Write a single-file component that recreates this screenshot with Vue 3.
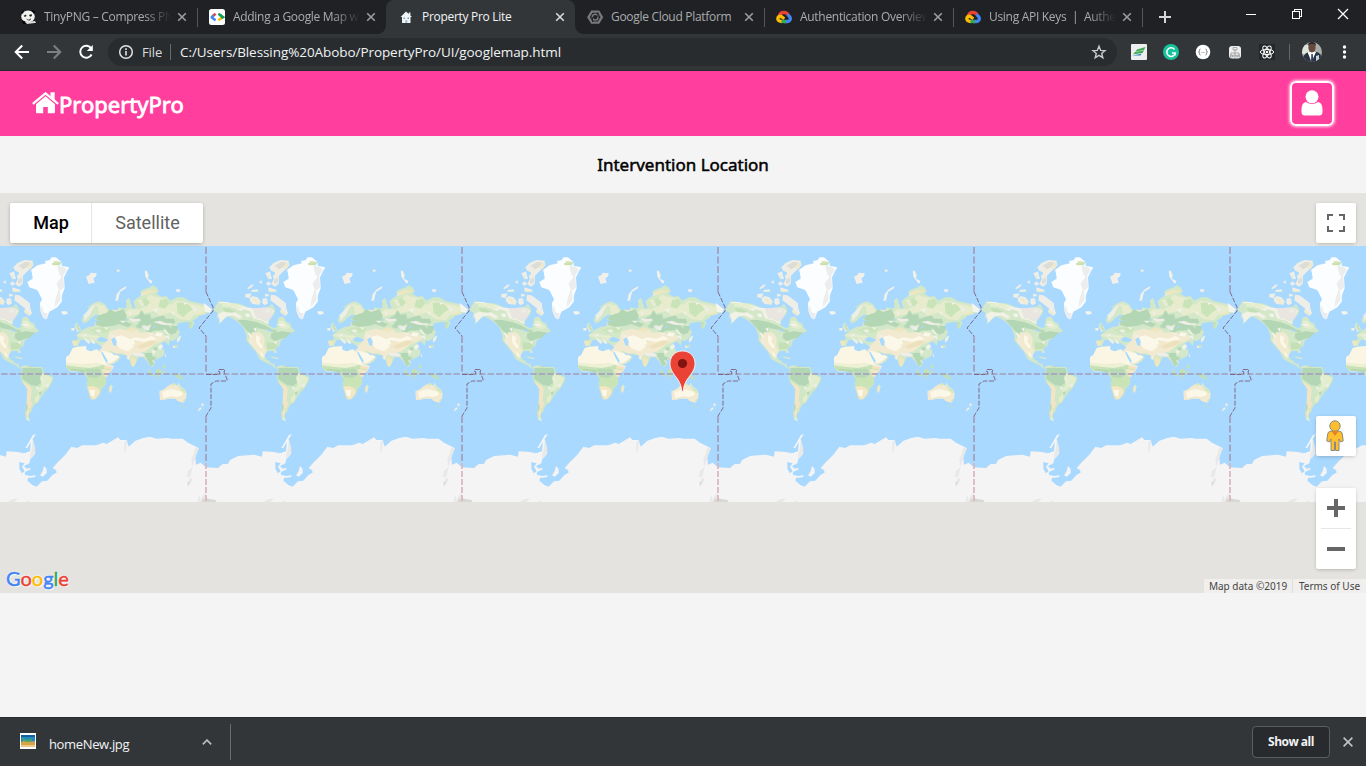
<script setup>
const tabs = [
  { title: 'TinyPNG – Compress PN', icon: 'panda', fade: true },
  { title: 'Adding a Google Map w', icon: 'code', fade: true },
  { title: 'Property Pro Lite', icon: 'home', active: true },
  { title: 'Google Cloud Platform', icon: 'hex' },
  { title: 'Authentication Overview', icon: 'cloud', fade: true },
  { title: 'Using API Keys  |  Authe', icon: 'cloud', fade: true },
]
const tiles = [-50, 206, 462, 718, 974, 1230]
const logo = [
  ['G', 'b'], ['o', 'r'], ['o', 'y'], ['g', 'b'], ['l', 'g'], ['e', 'r'],
]
</script>

<template>
  <div class="window">
    <div class="tabstrip">
      <div v-for="(t, i) in tabs" :key="i" class="tab" :class="{ active: t.active, sep: i !== 1 && i !== 2 }">
        <svg class="favicon" viewBox="0 0 16 16">
          <g v-if="t.icon === 'panda'">
            <ellipse cx="7" cy="7.5" rx="6.8" ry="6" fill="#f1f1ee" />
            <path d="M0 3L3 1L2 5ZM10 1L14 2L13 5ZM1 11Q7 15 13 12L15 15H2Z" fill="#050505" />
            <path d="M2.7 6.8L5 5.5L5.5 7L3.8 8ZM8 6L10.5 5L11 7L9 7.7ZM5 9.5Q8 12 10 9L9.5 11Q7 12.5 5 9.5Z" fill="#222" />
            <path d="M4 13L14 12L15 14L6 15Z" fill="#ddd" />
          </g>
          <g v-else-if="t.icon === 'code'" transform="translate(-1 0)">
            <rect width="16" height="16" rx="2.5" fill="#fff" />
            <g fill="none" stroke-width="2.6">
              <path d="M6.6 4.8L4.1 6.8" stroke="#ea4335" /><path d="M2 8L6.6 11.2" stroke="#4285f4" /><path d="M4.5 6.5L2.3 8.4" stroke="#4285f4" />
              <path d="M9.4 4.8L12 6.8" stroke="#0f9d58" /><path d="M11.5 6.4L14 8.2L12 9.5" stroke="#0f9d58" /><path d="M12.3 9L9.4 11.2" stroke="#fbbc05" />
            </g>
          </g>
          <g v-else-if="t.icon === 'home'" transform="translate(-1 .5)">
            <path d="M8 2L2.6 7.5H4V13.5H12.500V7.500H14L12.400 6V3H10.800V4.500Z" fill="#eef4f7" />
            <path d="M5.5 8H7V9.5H5.5ZM9.5 8H11V9.5H9.5Z" fill="#7e9ba9" /><path d="M7.300 10.500H9.300V13.500H7.300Z" fill="#a9bec8" />
          </g>
          <g v-else-if="t.icon === 'hex'" transform="translate(-.5 .5) scale(.96)">
            <path d="M4.5 2.3H11.5L15 8L11.5 13.7H4.5L1 8Z" fill="none" stroke="#77797b" stroke-width="2.4" />
            <circle cx="8" cy="8" r="3" fill="none" stroke="#77797b" stroke-width="1.5" />
            <path d="M10.800 3V8M5.200 8V13" stroke="#202124" />
          </g>
          <g v-else fill="none" stroke-width="3.300" transform="translate(-1 0)">
            <path d="M3.5 7Q4 3.5 8 3.4Q11 3.4 12 6" stroke="#ea4335" />
            <path d="M11.5 5.5Q15 8 14.2 10.5Q13.5 12.5 11 12.5H8" stroke="#4285f4" />
            <path d="M10 12.5H5" stroke="#34a853" />
            <path d="M5.500 12.5Q1.6 12 1.8 9.5Q2.3 7 5 7.3L8.300 9.8" stroke="#fbbc05" />
          </g>
        </svg>
        <span class="title" :class="{ fade: t.fade }">{{ t.title }}</span>
        <svg class="close" viewBox="0 0 10 10"><path d="M1.2 1.2L8.8 8.8M8.8 1.2L1.2 8.8" /></svg>
      </div>
      <svg class="plus" viewBox="0 0 12 12"><path d="M6 0V12M0 6H12" /></svg>
      <svg class="winbtns" viewBox="0 0 110 20" shape-rendering="crispEdges">
        <path d="M0 10.5H10M48.5 7.5H53.5V14.5H46.5V7.5H48.5M48.5 7V5.5H55.5V12.5H54" fill="none" stroke="#fff" />
        <path d="M92 5L102 15M102 5L92 15" stroke="#fff" stroke-width="1.3" shape-rendering="auto" />
      </svg>
    </div>

    <div class="toolbar">
      <svg class="nav" viewBox="0 0 108 36" fill="none" stroke-width="2">
        <path d="M29 18H16M22.2 11.5L15.7 18L22.2 24.5" stroke="#fff" />
        <path d="M47 18H60M53.8 11.5L60.3 18L53.8 24.5" stroke="#7d8082" />
        <path d="M91.3 14.5A6 6 0 1 0 91.6 20.5" stroke="#fff" />
        <path d="M92.8 11V17H86.8Z" fill="#fff" />
      </svg>
      <div class="omnibox">
        <svg class="info" viewBox="0 0 16 16"><circle cx="8" cy="8" r="6.3" fill="none" stroke="#e3e4e5" stroke-width="1.5" /><path d="M8 7V11.5M8 4.3V5.9" stroke="#e3e4e5" stroke-width="1.6" /></svg>
        <span class="file">File</span><i class="bar"></i>
        <span class="url">C:/Users/Blessing%20Abobo/PropertyPro/UI/googlemap.html</span>
        <svg class="star" viewBox="0 0 16 16"><path d="M8 2.2L9.7 6.4L14 6.700L10.7 9.5L11.800 13.700L8 11.4L4.200 13.700L5.3 9.5L2 6.700L6.3 6.4Z" fill="none" stroke="#c8cacc" stroke-width="1.4" /></svg>
      </div>
      <svg class="exts" viewBox="0 0 249 36">
        <rect x="14" y="10" width="16" height="16" rx="1" fill="#eeeeef" />
        <path d="M20 15.500L28.500 13L27 16L18.500 17.500ZM18 18L27 16.5L25.5 19L16 20.3Z" fill="#3eaa55" /><path d="M15 21.500L24.500 19.8L23.500 21.500Z" fill="#2786b5" />
        <circle cx="54" cy="18" r="8" fill="#15c39a" />
        <path d="M57.5 15.5A4.3 4.3 0 1 0 58.3 19H55M58 18.5V21.5" fill="none" stroke="#fff" stroke-width="1.6" />
        <circle cx="86" cy="18" r="7.3" fill="#fff" />
        <path d="M83.5 15Q82.3 15 82.5 16.500Q82.5 18 81.500 18Q82.5 18 82.5 19.500Q82.3 21 83.5 21M88.5 15Q89.7 15 89.5 16.500Q89.5 18 90.500 18Q89.5 18 89.5 19.500Q89.7 21 88.5 21M84.500 18.5H85.4M86.6 18.5H87.5" fill="none" stroke="#777" stroke-width=".9" />
        <rect x="112" y="12" width="12" height="12.5" rx="3" fill="#eee" />
        <path d="M118 15V22M114 22V19H122V22M116 13.5H120V16H116ZM113.500 21H115.5V23H113.500ZM116.8 21H119.2V23H116.8ZM120.5 21H122.500V23H120.5Z" fill="none" stroke="#9a9a9a" stroke-width=".8" />
        <rect x="142" y="10" width="16" height="16" fill="#25282b" />
        <g fill="none" stroke="#fff" stroke-width="1"><ellipse cx="150" cy="18" rx="6.700" ry="2.6" /><ellipse cx="150" cy="18" rx="6.700" ry="2.6" transform="rotate(60 150 18)" /><ellipse cx="150" cy="18" rx="6.700" ry="2.6" transform="rotate(120 150 18)" /></g><circle cx="150" cy="18" r="1.2" fill="#fff" />
        <path d="M172.5 10V26" stroke="#65686b" />
        <clipPath id="av"><circle cx="195" cy="18" r="10" /></clipPath>
        <g clip-path="url(#av)"><rect x="185" y="8" width="20" height="20" fill="#aaada9" /><path d="M185 11H192V20H185Z" fill="#dfe3de" /><path d="M185 28Q186 20 191 18H200Q205 20 206 28Z" fill="#293344" /><path d="M190.500 18L194.500 28L199 18Z" fill="#fff" /><path d="M194.3 20H195.8L196.3 28H194Z" fill="#34415f" /><path d="M199 22L202 21V28H199Z" fill="#ccd3dc" /><ellipse cx="195" cy="13.5" rx="3.6" ry="5" fill="#68483e" /><path d="M191 12Q191 7.5 195 7.7Q199 7.5 199 12L197 10H193Z" fill="#262322" /></g>
        <g fill="#fff"><circle cx="224.500" cy="13" r="1.7" /><circle cx="224.500" cy="18" r="1.7" /><circle cx="224.500" cy="23" r="1.7" /></g>
      </svg>
    </div>

    <header class="site">
      <div class="brand">
        <svg viewBox="0 0 27 22"><path d="M13.5 4.3L4 12.3V20.2Q4 21.2 5 21.2H11.2V15H15.8V21.2H22Q23 21.2 23 20.2V12.3Z" fill="#fff" /><path d="M.8 11.8L13.5 1.4L26.2 11.8" fill="none" stroke="#fff" stroke-width="2.3" /><path d="M18.5 .3H22.7V8.5L18.5 5Z" fill="#fff" /></svg>
        <span>PropertyPro</span>
      </div>
      <div class="userbtn"><svg viewBox="0 0 22 26"><path d="M5 12Q.5 12.5 .5 20V22Q.5 25.5 4 25.5H18Q21.5 25.5 21.5 22V20Q21.5 12.5 17 12Q14.5 14 11 14Q7.500 14 5 12Z" /><circle cx="11" cy="6.800" r="6.500" /></svg></div>
    </header>

    <h1 class="heading"><span>Intervention Location</span></h1>

    <div class="map">
      <svg class="world" viewBox="0 0 1366 256">
        <defs>
          <g id="world-tile">
            <g transform="translate(0 -6) scale(.33333)">
              <!-- North America -->
              <path fill="#d3e8c8" d="M22 210L38 184L50 184L72 190L95 190L118 198L130 208L148 204L170 208L190 200L198 192L208 210L205 222L190 240L188 256L206 266L212 262L217 232L232 230L240 245L252 250L256 262L268 274L250 280L238 294L225 300L220 318L208 326L213 338L208 340L200 332L184 334L176 345L180 358L190 362L194 370L206 372L206 380L216 384L210 386L195 375L175 366L160 356L150 335L135 318L122 302L120 280L112 262L98 248L82 236L65 228L52 240L34 254L46 236L32 232L36 220Z" />
              <path fill="#f2f1e6" d="M34 186L62 186L95 194L122 202L148 206L170 208L185 202L204 212L190 238L184 252L168 242L142 236L132 214L114 208L105 214L86 204L62 198ZM36 222L55 214L72 210L92 220L110 230L100 236L78 226L60 230L42 250Z" />
              <path fill="#e5edcf" d="M45 188L88 192L108 202L98 207L78 200L50 200ZM217 242L232 242L252 262L240 268L222 262Z" />
              <path fill="#b3d6b4" d="M94 240L120 240L150 246L176 256L198 268L214 272L208 278L184 270L155 264L148 280L144 286L126 276L114 262ZM196 280L228 274L256 278L238 294L220 298L208 304L194 294Z" />
              <path fill="#e9e6e1" d="M140 206L180 202L200 212L196 232L184 246L164 238L150 234Z" />
              <path fill="#f2ead0" d="M140 276L164 278L176 292L174 316L182 334L176 345L174 358L155 338L142 322L126 300Z" />
              <path fill="#fbf7e9" d="M150 284L163 292L160 306L170 318L165 326L150 306ZM160 332L174 346L168 352Z" />
              <path fill="#c3dfb6" d="M182 306L202 310L218 306L214 320L206 326L184 328ZM50 205L72 206L90 215L78 218L57 216Z" />
              <path fill="#f3f3ec" d="M124 276L132 280L140 296L134 294ZM142 266L152 262L150 276ZM116 222L128 220L134 230L122 232ZM212 254L228 250L240 258L226 258ZM204 306L212 302L212 316ZM62 222L70 220L76 228ZM128 300L134 302L140 316Z" />
              <path fill="#a9d9ff" d="M178 264L194 269L198 276L188 274Z" />
              <!-- Arctic archipelago -->
              <path fill="#eeeee7" d="M190 82L204 68L224 60L248 62L250 76L240 88L230 96L219 108L218 132L206 140L196 132L204 116L200 110L208 98L196 92ZM178 100L192 94L198 116L188 118ZM130 176L140 168L154 172L164 184L160 194L140 192L134 186ZM118 162L136 160L132 174L118 172ZM194 164L208 166L228 180L240 190L240 202L246 220L238 228L222 216L226 206L206 190L194 182ZM170 176L182 174L186 190L176 196L168 188ZM124 144L136 134L144 132L138 142L126 148ZM188 142L212 150L210 156L186 152ZM136 150L156 148L156 155L138 156ZM180 130L188 124L196 132L186 138ZM158 128L168 120L168 130ZM176 162L188 162L188 168L178 170ZM176 212L188 210L192 216L178 218Z" />
              <path fill="#dcdcd8" d="M206 78L224 66L242 68L232 80L219 88ZM204 120L216 112L214 130L204 130Z" />
              <path fill="#f0eac6" d="M228 82L248 66L250 74L236 88ZM138 174L152 178L160 192L150 190ZM188 152L210 152L210 156L190 156ZM224 208L240 220L238 226L226 218Z" />
              <!-- Greenland and Iceland -->
              <path fill="#fcfdff" d="M243 90L262 76L288 70L284 64L300 60L304 52L318 52L334 66L336 78L358 82L348 100L342 112L344 145L335 168L336 184L322 202L298 215L290 238L280 234L272 215L270 190L276 178L262 150L238 142L232 126L248 116L246 100Z" />
              <path fill="#ebedee" d="M322 76L338 80L352 88L340 106L342 142L330 152L332 180L314 202L316 178L326 148L320 130L334 112L326 98ZM270 204L278 200L280 216L294 222L288 238L278 228Z" />
              <path fill="#c9e2b3" d="M304 72L318 64L334 66L330 76L310 76Z" /><path fill="#eadfb7" d="M308 62L326 66L318 70Z" />
              <path fill="#f5f4e9" d="M334 214L350 214L354 220L344 224L336 222Z" />
              <path fill="#f1f0ea" d="M408 110L418 106L422 98L440 100L438 110L430 114L434 128L426 130L416 132ZM500 88L509 90L508 95L501 95ZM584 92L590 92L596 104L594 116L602 122L600 128L586 110ZM598 118L606 122L606 130L598 128ZM678 148L690 148L690 155L680 156ZM496 182L500 162L512 148L530 138L528 145L510 156L504 182Z" />
              <!-- Eurasia -->
              <path fill="#d3e8c8" d="M395 242L398 232L410 218L418 198L432 188L448 184L466 194L472 204L478 212L490 208L500 214L506 202L520 206L530 202L528 180L538 174L542 188L548 204L556 206L550 184L560 174L572 168L574 152L586 146L600 142L608 136L622 144L626 154L620 162L634 170L650 168L660 182L680 172L700 172L720 184L745 188L768 196L782 204L777 216L766 222L748 226L738 238L726 240L733 246L726 264L718 266L720 246L702 246L686 250L678 260L690 276L684 290L670 304L660 300L656 316L644 304L634 310L628 322L643 330L642 346L632 352L615 360L614 374L606 382L598 374L590 362L580 352L568 350L560 362L552 382L544 378L538 358L528 346L498 342L490 338L512 350L504 364L474 378L466 358L450 336L454 322L424 316L416 304L404 298L392 300L384 318L370 318L366 302L386 298L378 286L390 276L404 266L414 262L424 256L430 228L412 246L402 250Z" />
              <path fill="#e7ecce" d="M436 192L460 196L474 212L470 222L448 226L444 202ZM480 214L510 208L528 218L534 208L570 208L590 196L570 188L600 164L615 170L648 176L662 196L680 182L714 190L748 196L772 206L758 222L732 224L720 240L690 238L660 218L630 228L612 214L570 222L530 230L500 216ZM560 180L580 178L588 190L576 200ZM380 286L398 280L420 284L448 288L462 302L448 304L418 292L398 290Z" />
              <path fill="#c9e4b9" d="M575 178L590 174L600 188L586 200ZM630 180L650 176L658 190L645 206L626 200ZM680 188L710 188L728 208L712 220L700 232L682 218ZM420 270L448 262L480 266L470 278L440 280Z" />
              <path fill="#b3d6b4" d="M440 228L470 218L480 208L494 216L520 208L530 226L528 246L548 252L534 262L508 252L488 258L458 260L438 254ZM546 236L566 226L574 210L584 224L600 222L604 236L640 226L648 236L672 236L676 248L656 256L664 266L680 276L664 284L644 270L610 272L602 278L588 274L598 258L580 254L572 266L556 260L568 248Z" />
              <path fill="#f2ead0" d="M442 318L462 314L472 296L480 274L508 266L536 272L558 268L572 278L600 276L622 286L640 284L652 294L636 304L614 312L600 324L584 336L556 338L536 352L520 340L498 340L476 330L484 346L510 350L494 368L474 374L462 352L452 336Z" />
              <path fill="#fbf7e9" d="M492 292L514 286L542 298L554 292L584 296L604 288L620 296L592 306L564 318L550 312L548 324L532 334L510 326L500 312ZM454 330L472 336L488 340L508 350L488 366L474 370L460 344ZM620 276L640 280L630 290L614 286Z" />
              <path fill="#e5d6a5" opacity=".45" d="M552 300L580 306L604 300L620 306L600 318L572 326L556 316Z" />
              <path fill="#b3d6b4" d="M580 340L604 338L608 350L620 352L612 362L604 358L612 374L602 378L592 358ZM664 258L680 258L684 268L676 280L662 270ZM608 324L624 320L620 332Z" />
              <path fill="#eeeee8" d="M400 226L422 204L438 190L420 224L404 242ZM536 236L570 236L572 244L548 246ZM508 242L528 242L520 250ZM574 256L590 260L604 252L596 272L584 268ZM610 246L630 242L650 250L668 250L660 256L636 254ZM434 270L448 268L456 276L444 278ZM548 340L568 336L586 344L578 350L554 348ZM596 282L612 278L606 286ZM728 198L742 208L732 216ZM568 168L584 158L602 148L592 162ZM478 286L494 282L490 294L480 292ZM396 286L412 280L410 288Z" />
              <path fill="#f0f1e8" d="M622 322L634 312L640 320L630 330ZM604 330L618 334L610 344ZM644 290L656 286L660 298ZM612 204L626 208L620 216L610 212ZM664 214L676 218L670 224ZM534 214L546 218L540 226ZM700 186L716 190L704 194ZM462 262L476 262L470 270ZM528 352L540 350L536 360ZM640 264L650 272L658 286L646 278Z" />
              <path fill="#f0e6be" d="M570 158L592 152L620 150L608 158L586 164ZM540 354L550 350L560 362L552 378L546 378ZM528 268L546 262L562 270L546 276ZM366 304L382 302L382 316L370 316ZM738 222L762 216L766 222L748 226Z" />
              <path fill="#a9d9ff" d="M416 252L424 240L438 222L444 228L434 240L450 240L436 246L432 258L420 260ZM444 294L454 290L468 296L476 298L466 306L450 306L440 300ZM484 298L494 292L500 304L498 318L490 316ZM384 316L396 304L406 298L414 308L424 300L436 306L446 314L456 318L454 328L438 328L424 330L414 320ZM456 334L474 364L468 366L454 342ZM486 336L500 346L490 344ZM528 236L536 238L532 244ZM610 256L618 262L610 268Z" />
              <path fill="#eef0e0" d="M398 288L410 296L422 306L416 312L404 300ZM418 294L434 302L436 312L426 310ZM378 266L374 258L380 248L388 260L394 270L382 276ZM364 264L374 264L372 272L364 272ZM686 290L694 286L690 300L682 308L680 298ZM668 318L684 314L682 322L670 324ZM644 344L648 342L646 354Z" />
              <path fill="#c5e1b7" d="M376 254L384 252L388 264L394 270L384 272ZM670 316L684 314L680 322ZM716 246L728 244L724 262L718 264Z" />
              <path fill="#f6f5ec" d="M-8 188L18 208L12 218L-2 216Z" />
              <!-- Africa -->
              <path fill="#fbf5e4" d="M348 352L358 344L368 324L380 320L408 318L410 330L422 334L440 328L452 336L460 352L472 374L492 378L484 392L468 407H408L400 396L360 394L348 380Z" />
              <path fill="#c7e2b5" d="M348 374L376 378L400 380L430 380L448 372L464 376L472 382L468 407H408L400 394L358 392L348 382Z" />
              <path fill="#edf0d4" d="M348 368L394 372L440 368L458 372L450 378L420 384L380 380L350 376Z" />
              <path fill="#b3d6b4" d="M362 386L396 389L418 391L446 390L456 407H410L398 397L364 392Z" />
              <path fill="#f4e3c3" d="M464 376L490 380L480 394L468 407H460Z" />
              <!-- Caribbean, South America top and Asian islands -->
              <path fill="#d7e9c9" d="M190 350L204 350L218 354L216 358L200 354ZM212 380L226 376L250 382L274 392L280 407H214L222 394Z" />
              <path fill="#b3d6b4" d="M226 382L244 378L270 390L278 407H222Z" />
              <path fill="#c8e2b5" d="M636 376L644 374L646 384L640 386ZM592 388L602 394L608 407H600ZM618 390L630 386L636 398L630 407H616ZM640 394L650 400L646 404ZM580 374L585 380L582 382Z" />
            </g>
            <g transform="translate(0 124) scale(.33333)">
              <!-- South America -->
              <path fill="#cfe7c4" d="M216 -2L222 -9L276 -9L282 8L308 20L310 30L296 54L280 72L264 98L252 104L244 124L236 134L240 152L228 148L225 126L230 96L232 54L216 36L212 18Z" />
              <path fill="#b3d6b4" d="M218 -6L274 -6L278 8L270 20L276 36L262 48L244 46L234 38L216 26Z" />
              <path fill="#f0e5c4" d="M216 34L236 44L246 56L242 92L248 104L238 118L234 142L228 136L230 96L232 58Z" />
              <path fill="#e3edcf" d="M278 10L308 24L296 48L282 54L270 74L262 68L276 44L270 26ZM256 80L270 72L264 94L254 98Z" />
              <path fill="#f0f1e8" d="M274 22L282 28L278 36ZM288 46L298 40L292 54ZM258 48L270 56L260 60ZM230 140L240 152L230 150Z" />
              <path fill="#b3d6b4" d="M229 102L233 106L232 120L227 126ZM266 66L276 64L270 78Z" />
              <!-- Southern Africa -->
              <path fill="#cce4bb" d="M408 -4L486 -4L476 10L468 24L468 42L456 56L448 76L436 88L422 88L416 72L410 48L412 28L402 10Z" />
              <path fill="#b3d6b4" d="M404 -4L450 -4L454 14L444 24L440 44L430 46L412 34L414 20Z" opacity=".8" />
              <path fill="#c9e4b5" d="M414 22L436 24L450 18L466 24L466 40L452 48L432 52L412 48Z" />
              <path fill="#f3e7c6" d="M456 -2L484 0L470 22L462 18ZM412 50L428 48L444 54L450 66L444 78L434 88L424 88Z" />
              <path fill="#fbf7e9" d="M418 60L436 60L432 80L422 76Z" /><path fill="#eee8c8" d="M482 44L488 48L484 66L478 68L477 54Z" />
              <!-- Oceania -->
              <path fill="#f2ead0" d="M628 64L642 58L654 48L664 42L674 40L682 48L686 38L692 50L704 58L710 70L708 86L700 98L684 94L676 86L656 86L640 90L630 90Z" />
              <path fill="#fbf7e9" d="M636 66L660 58L680 60L696 66L698 76L680 82L664 78L640 84Z" /><path fill="#d5e7bc" d="M658 46L674 40L678 46ZM684 40L690 52L702 58L710 68L704 70L688 56ZM698 92L708 84L704 96Z" />
              <path fill="#c4e0b0" d="M594 -2L604 8L612 18L606 18L598 8ZM618 0L630 -4L632 10L622 14ZM638 0L646 4L642 14ZM668 8L684 10L694 22L702 28L690 28L676 18ZM612 20L630 22L628 26ZM694 106L702 108L698 114Z" />
              <path fill="#eef2df" d="M756 98L762 104L758 110L754 106ZM750 112L756 114L748 122L742 124Z" />
              <!-- Antarctica -->
              <path fill="#f4f4f4" d="M0 292L36 294L50 282L66 282L72 270L96 258L145 254L168 260L170 244L204 246L222 250L240 244L242 216L232 234L226 234L238 214L248 196L258 192L248 206L254 236L256 250L242 264L238 280L222 288L230 296L240 294L242 298L226 306L224 314L240 318L258 316L254 322L234 324L232 332L248 346L260 350L276 334L292 332L308 314L320 308L318 300L308 294L324 276L346 254L364 230L382 234L396 226L438 226L460 218L470 222L504 202L512 210L530 210L536 230L556 212L580 204L600 200L620 206L650 204L666 206L698 206L714 218L746 234L740 250L736 264L738 284L752 278L768 292V396H0Z" />
              <path fill="#f4f4f4" d="M282 288L290 296L290 310L278 320L270 316L278 304Z" />
              <path fill="#a9d9ff" d="M208 276L224 280L216 290L224 304L216 310L208 296Z" />
              <path fill="#e9e9e8" d="M248 208L256 236L254 254L242 268L240 254L246 234ZM524 212L532 214L526 248L522 240ZM736 234L746 236L736 260L728 292L724 270ZM716 300L728 292L722 318L708 322ZM720 322L728 330L714 350L710 342ZM172 396L186 388L204 384L194 396ZM232 390L240 396H230ZM742 396L748 374L752 386L752 396ZM758 376L770 368L768 396H754Z" />
              <path fill="#d8d8d7" d="M0 384L14 388L28 390L32 396H0ZM712 340L722 334L716 346ZM758 384L768 390V396H754Z" />
            </g>
            <!-- Date line and borders -->
            <g fill="none" stroke="#a29cbb" stroke-width="1.7" stroke-dasharray="7 2.5">
              <path d="M0 1V46M0 90V128M0 170V217" /><path d="M0 128H256" stroke-dasharray="6.400 2.133" />
            </g>
            <path d="M0 217V256" stroke="#d8b6b9" stroke-width="1.700" stroke-dasharray="6 2" />
            <path d="M0 46L7 61V65L-7 82L0 90M0 128.500H13L14 126L12 125L13 123.500H19L18 126L21 133V135L10 135L5 138V162L0 170" fill="none" stroke="#806a88" stroke-width="1" stroke-dasharray="5 1.500" />
          </g>
        </defs>
        <rect width="1366" height="256" fill="#a9d9ff" />
        <use v-for="x in tiles" :key="x" href="#world-tile" :x="x" />
      </svg>

      <svg class="pin" viewBox="0 0 27 43"><path d="M13.500 1C6 1 1 6.500 1 13.500C1 20 5 24 8.500 29C11.500 33.500 12.500 37 12.800 41.500H14.200C14.500 37 15.500 33.500 18.500 29C22 24 26 20 26 13.500C26 6.500 21 1 13.500 1Z" fill="#ea4335" stroke="#fff" stroke-opacity=".8" stroke-width="1" /><circle cx="13.500" cy="13.500" r="4.600" fill="#811411" /></svg>

      <div class="maptype"><span class="on">Map</span><span class="off">Satellite</span></div>
      <div class="ctl full"><svg viewBox="0 0 18 18"><path d="M1 6V1H6M12 1H17V6M17 12V17H12M6 17H1V12" /></svg></div>
      <div class="ctl peg">
        <svg viewBox="0 0 18 32"><path d="M5 11Q1.500 11.500 1.500 15L.8 21L3.600 22L5 19V30.500H8.500V22H9.500V30.500H13V19L14.400 22L17.200 21L16.500 15Q16.500 11.500 13 11Z" fill="#fdbf2d" stroke="#7c817f" stroke-width=".9" /><circle cx="9" cy="6" r="5.200" fill="#fdbf2d" stroke="#7c817f" stroke-width=".9" /><path d="M5.500 11H12.500L9 16Z" fill="#e58026" /></svg>
      </div>
      <div class="ctl zoom"><i class="h"></i><i class="v"></i><i class="line"></i><i class="h minus"></i></div>
      <div class="google"><span v-for="(c, i) in logo" :key="i" :class="c[1]">{{ c[0] }}</span></div>
      <div class="attr"><span>Map data ©2019</span><span>Terms of Use</span></div>
    </div>

    <div class="rest"></div>

    <footer class="downloads">
      <svg class="thumb" viewBox="0 0 16 16"><rect width="16" height="16" fill="#fff" /><rect x="1" y="2" width="14" height="12" fill="#2588c4" /><path d="M1 2H15V4H1Z" fill="#155f9f" /><path d="M1 9Q5 7 8 8T15 8V14H1Z" fill="#d6a54a" /><path d="M2 7L4 4L5 7L7 6L8 7L11 5L12 8L6 9Z" fill="#43a76a" /><path d="M1 12H15V14H1Z" fill="#eec780" /></svg>
      <span class="fname">homeNew.jpg</span>
      <svg class="chev" viewBox="0 0 10 6"><path d="M.8 5.300L5 1.100L9.200 5.300" /></svg>
      <i class="dsep"></i>
      <span class="showall">Show all</span>
      <svg class="dclose" viewBox="0 0 10 10"><path d="M.6 .6L9.400 9.400M9.400 .6L.6 9.400" /></svg>
    </footer>
  </div>
</template>

<style>
body { background: #f4f4f4; overflow: hidden; }
</style>

<style scoped>
.window { width: 1366px; height: 766px; display: flex; flex-direction: column; background: #f4f4f4; font-family: "Open Sans", "Noto Sans", sans-serif; overflow: hidden; }
svg { display: block; flex: none; }
.tabstrip { height: 34px; flex: none; background: #202124; display: flex; padding-left: 8px; }
.tab { width: 189px; box-sizing: border-box; position: relative; display: flex; align-items: center; padding: 0 10px 0 13px; color: #a9acaf; }
.tab.sep::after { content: ""; position: absolute; right: -1px; top: 8px; width: 1px; height: 19px; background: #53565a; }
.tab.active { background: #323639; border-radius: 8px 8px 0 0; color: #f1f3f4; }
.tab.active::before, .tab.active::after { content: ""; position: absolute; bottom: 0; width: 8px; height: 8px; display: block; }
.tab.active::before { left: -8px; background: radial-gradient(circle at 0 0, #202124 7.5px, #323639 8px); }
.tab.active::after { right: -8px; background: radial-gradient(circle at 100% 0, #202124 7.5px, #323639 8px); }
.favicon { width: 16px; height: 16px; overflow: visible; }
.title { width: 130px; flex: none; margin-left: 7px; font-size: 12px; line-height: 18px; white-space: pre; letter-spacing: -.3px; }
.title.fade { -webkit-mask-image: linear-gradient(90deg, #000 100px, transparent 127px); mask-image: linear-gradient(90deg, #000 100px, transparent 127px); }
.close { width: 10px; height: 10px; margin-left: 3px; }
.close path { stroke: #9a9da0; stroke-width: 1.6; }
.active .close path { stroke: #d8dadb; }
.plus { width: 12px; height: 12px; margin: 11px 0 0 17px; }
.plus path { stroke: #d4d6d8; stroke-width: 2; }
.winbtns { width: 110px; height: 20px; margin: 4px 0 0 75px; }
.toolbar { height: 37px; box-sizing: border-box; flex: none; background: #323639; border-bottom: 1px solid #25282a; display: flex; }
.nav { width: 108px; height: 36px; }
.omnibox { width: 1009px; height: 28px; margin-top: 4px; border-radius: 14px; background: #282c2f; display: flex; align-items: center; color: #f1f3f4; font-size: 13px; }
.info { width: 16px; height: 16px; margin-left: 10px; }
.file { width: 27px; margin-left: 8px; color: #dadcde; letter-spacing: -.1px; }
.bar { width: 1px; height: 16px; background: #686b6e; margin-left: 1px; }
.url { margin-left: 9px; font-size: 13.5px; letter-spacing: -.07px; white-space: nowrap; }
.star { width: 16px; height: 16px; margin: 0 10px 0 auto; }
.exts { width: 249px; height: 36px; }
.exts g:last-child { transform: translateX(3px); }
.site { height: 65px; flex: none; box-sizing: border-box; background: #ff3e9d; display: flex; justify-content: space-between; align-items: flex-start; padding: 10px 32px 0 32px; color: #fff; }
.brand { display: flex; align-items: flex-start; padding-top: 11px; font: 400 22px/28px "Noto Sans", sans-serif; }
.brand svg { width: 27px; height: 22px; }
.brand span { margin-top: -2px; -webkit-text-stroke: .8px #fff; }
.userbtn { width: 44px; height: 45px; box-sizing: border-box; border: 2px solid #fff; border-radius: 6px; box-shadow: 0 0 3px 1px rgba(255, 255, 255, .8); display: flex; justify-content: center; padding-top: 7px; }
.userbtn svg { width: 22px; height: 26px; fill: #fff; }
.heading { height: 57px; flex: none; margin: 0; display: flex; align-items: center; justify-content: center; font: 400 17px/24px "Noto Sans", sans-serif; color: #000; -webkit-text-stroke: .5px #000; }
.map { height: 400px; flex: none; position: relative; background: #e5e3df; overflow: hidden; }
.world { width: 1366px; height: 256px; margin-top: 53px; }
.pin { position: absolute; left: 669px; top: 157px; width: 27px; height: 43px; }
.maptype { position: absolute; left: 10px; top: 10px; height: 40px; display: flex; background: #fff; border-radius: 2px; box-shadow: 0 1px 4px -1px rgba(0, 0, 0, .4); font: 18px/40px Roboto, sans-serif; }
.maptype span { text-align: center; box-sizing: border-box; }
.on { width: 82px; padding-left: 1px; font-weight: 500; color: #000; border-right: 1px solid #e6e6e6; }
.off { width: 111px; color: #616161; }
.ctl { position: absolute; left: 1316px; width: 40px; height: 40px; background: #fff; border-radius: 2px; box-shadow: 0 1px 4px -1px rgba(0, 0, 0, .3); }
.full { top: 10px; }
.full svg { width: 18px; height: 18px; margin: 11px; }
.full path { fill: none; stroke: #666; stroke-width: 2; }
.peg { top: 223px; }
.peg svg { width: 18px; height: 32px; margin: 4px 10px; }
.zoom { top: 295px; height: 81px; }
.zoom i { position: absolute; background: #666; }
.zoom .h { left: 11px; top: 18px; width: 18px; height: 4px; }
.zoom .v { left: 18px; top: 11px; width: 4px; height: 18px; }
.zoom .minus { top: 59px; }
.zoom .line { left: 5px; top: 40px; width: 30px; height: 1px; background: #e6e6e6; }
.google { position: absolute; left: 6px; top: 373px; font: 400 20px/24px Lato, sans-serif; -webkit-text-stroke: .5px currentColor; text-shadow: 0 0 2px #fff, 0 0 2px #fff, 1px 1px 1px #fff; white-space: nowrap; }
.b { color: #4285f4; } .r { color: #ea4335; } .y { color: #fbbc05; } .g { color: #34a853; }
.attr { position: absolute; right: 0; bottom: 0; height: 14px; display: flex; font: 10px/14px "Noto Sans", sans-serif; color: #444; white-space: nowrap; }
.attr span { box-sizing: border-box; background: #f0efed; text-align: center; width: 88px; }
.attr span + span { width: 74px; border-left: 1px solid #dfdedb; }
.rest { flex: 1; }
.downloads { height: 49px; flex: none; box-sizing: border-box; border-top: 1px solid #292c2e; background: #323639; display: flex; align-items: center; color: #f1f3f4; font-size: 13px; }
.thumb { width: 16px; height: 16px; margin-left: 20px; margin-top: -2px; }
.fname { width: 153px; margin: 3px 0 0 13px; letter-spacing: -.35px; }
.chev { width: 10px; height: 6px; }
.chev path { fill: none; stroke: #b9bbbd; stroke-width: 1.7; }
.dsep { width: 1px; height: 36px; background: #6a6d70; margin: 0 0 0 18px; }
.showall { width: 78px; height: 32px; box-sizing: border-box; border: 1px solid #5b5e61; border-radius: 4px; background: #292a2d; margin-left: auto; margin-top: -1px; text-align: center; font-weight: 700; font-size: 12px; line-height: 29px; letter-spacing: -.5px; }
.dclose { width: 10px; height: 10px; margin: -1px 13px 0 13px; }
.dclose path { stroke: #c0c2c3; stroke-width: 1.6; }
</style>
